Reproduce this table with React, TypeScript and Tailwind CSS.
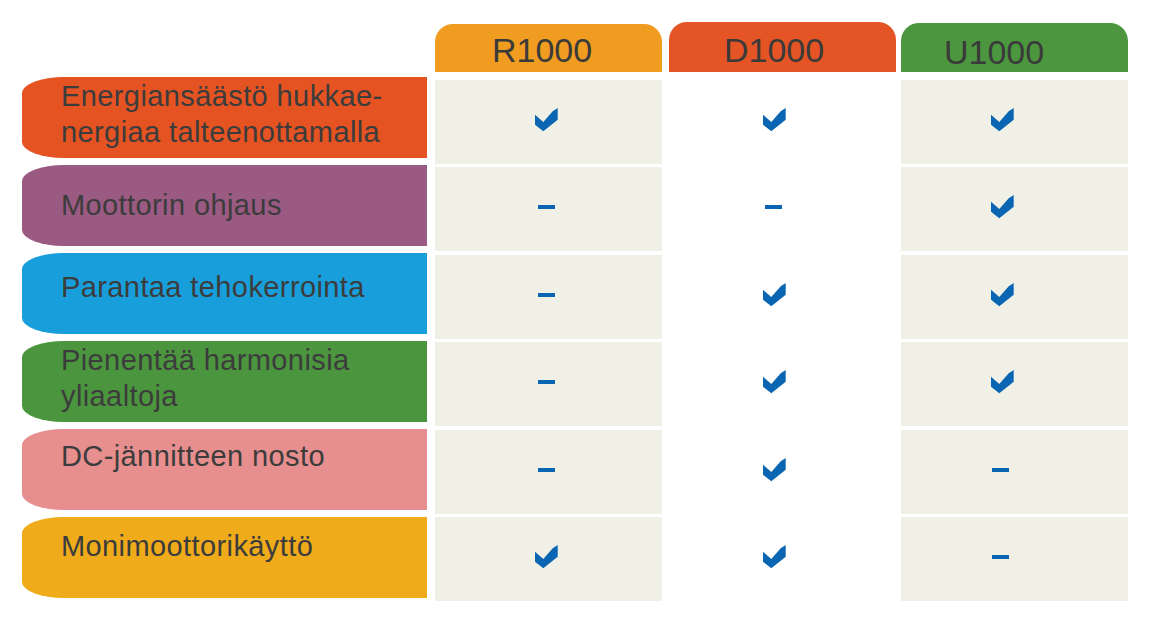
import React from "react";

type Mark = "c" | "d";

const labels: { text: string[]; bg: string; pt: string }[] = [
  { text: ["Energiansäästö hukkae-", "nergiaa talteenottamalla"], bg: "bg-[#e55323]", pt: "pt-[1px]" },
  { text: ["Moottorin ohjaus"], bg: "bg-[#9a5a82]", pt: "pt-[22px]" },
  { text: ["Parantaa tehokerrointa"], bg: "bg-[#189fdb]", pt: "pt-[16px]" },
  { text: ["Pienentää harmonisia", "yliaaltoja"], bg: "bg-[#4b953e]", pt: "pt-[1px]" },
  { text: ["DC-jännitteen nosto"], bg: "bg-[#e78f8e]", pt: "pt-[9px]" },
  { text: ["Monimoottorikäyttö"], bg: "bg-[#f0ab1a]", pt: "pt-[11px]" },
];

const cols: {
  name: string;
  headBg: string;
  headH: string;
  textPad: string;
  cellBg: string;
  checkPl: string;
  dashPl: string;
  marks: Mark[];
}[] = [
  {
    name: "R1000",
    headBg: "bg-[#ef9c20]",
    headH: "h-[48px]",
    textPad: "pl-[57px] pt-[9px]",
    cellBg: "bg-[#f1f0e6]",
    checkPl: "pl-[100px]",
    dashPl: "pl-[103px]",
    marks: ["c", "d", "d", "d", "d", "c"],
  },
  {
    name: "D1000",
    headBg: "bg-[#e55424]",
    headH: "h-[50px]",
    textPad: "pl-[55px] pt-[11px]",
    cellBg: "bg-white",
    checkPl: "pl-[94px]",
    dashPl: "pl-[96px]",
    marks: ["c", "d", "c", "c", "c", "c"],
  },
  {
    name: "U1000",
    headBg: "bg-[#4b963e]",
    headH: "h-[49px]",
    textPad: "pl-[43px] pt-[12px]",
    cellBg: "bg-[#f1f0e6]",
    checkPl: "pl-[90px]",
    dashPl: "pl-[91px]",
    marks: ["c", "c", "c", "c", "d", "d"],
  },
];

function Check() {
  return (
    <svg width="23" height="24" viewBox="0 0 23 24" className="block">
      <polygon
        points="0,6.7 8.3,14 17.7,3.3 22.7,0 22.7,11.7 8.3,23.3 0,16.7"
        fill="#0a66b2"
      />
    </svg>
  );
}

export default function App() {
  return (
    <div
      className="w-[1174px] h-[631px] bg-white flex pl-[22px] pt-[22px] text-[#3c3c3c]"
      style={{ fontFamily: '"Liberation Sans", Arial, sans-serif' }}
    >
      <div className="w-[405px] flex flex-col gap-[7px] pt-[55px]">
        {labels.map((l, i) => (
          <div
            key={i}
            className={`h-[81px] ${l.bg} ${l.pt} pl-[39px] rounded-tl-[42px_16px] rounded-bl-[42px_16px] text-[29px] leading-[36px] tracking-[0.4px]`}
          >
            {l.text.map((t, j) => (
              <div key={j}>{t}</div>
            ))}
          </div>
        ))}
      </div>
      <div className="flex ml-[8px] gap-[7px]">
        {cols.map((c, ci) => (
          <div key={c.name} className={`w-[227px] flex flex-col ${ci === 2 ? "-ml-[2px]" : ""}`}>
            <div className="h-[50px] flex items-end">
              <div
                className={`w-full ${c.headH} ${c.headBg} rounded-t-[18px] ${c.textPad} text-[34px] leading-[34px] text-[#3a3a3a]`}
              >
                {c.name}
              </div>
            </div>
            <div className="mt-[8px] flex flex-col gap-[3.4px]">
              {c.marks.map((m, mi) => (
                <div
                  key={mi}
                  className={`h-[84px] ${c.cellBg} flex items-center pb-[4px] ${m === "c" ? c.checkPl : c.dashPl}`}
                >
                  {m === "c" ? <Check /> : <span className="block w-[17px] h-[4px] bg-[#0a66b2]" />}
                </div>
              ))}
            </div>
          </div>
        ))}
      </div>
    </div>
  );
}
